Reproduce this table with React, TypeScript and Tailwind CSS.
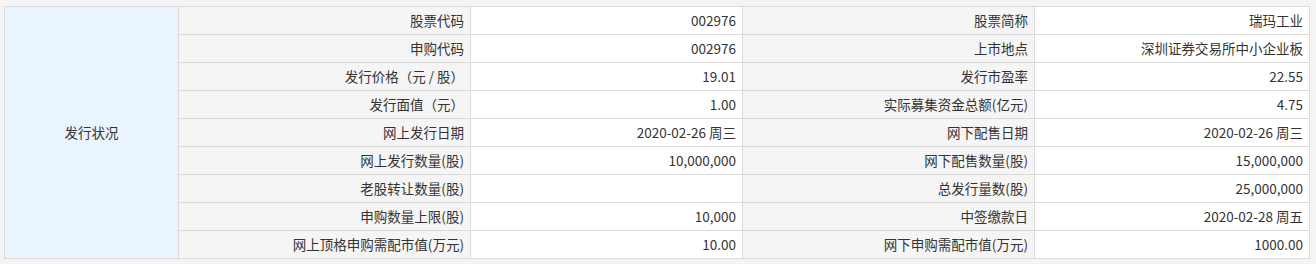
import React from 'react'

const rows: [string, string, string, string][] = [
  ['股票代码', '002976', '股票简称', '瑞玛工业'],
  ['申购代码', '002976', '上市地点', '深圳证券交易所中小企业板'],
  ['发行价格（元 / 股）', '19.01', '发行市盈率', '22.55'],
  ['发行面值（元）', '1.00', '实际募集资金总额(亿元)', '4.75'],
  ['网上发行日期', '2020-02-26 周三', '网下配售日期', '2020-02-26 周三'],
  ['网上发行数量(股)', '10,000,000', '网下配售数量(股)', '15,000,000'],
  ['老股转让数量(股)', '', '总发行量数(股)', '25,000,000'],
  ['申购数量上限(股)', '10,000', '中签缴款日', '2020-02-28 周五'],
  ['网上顶格申购需配市值(万元)', '10.00', '网下申购需配市值(万元)', '1000.00'],
]

const label = 'h-[28px] border border-[#dadada] bg-[#f5f5f5] px-[6px] text-right'
const value = 'h-[28px] border border-[#dadada] bg-white px-[6px] text-right'

export default function App() {
  return (
    <div
      className="h-[264px] w-[1316px] bg-[#f4f4f4] pl-[4px] pt-[6px] text-[13.5px] text-[#333] leading-none"
      style={{ fontFamily: '"Microsoft YaHei", "Noto Sans CJK SC", "Noto Sans", sans-serif' }}
    >
      <table className="w-[1305px] table-fixed border-collapse">
        <colgroup>
          <col className="w-[174px]" />
          <col className="w-[292px]" />
          <col className="w-[272px]" />
          <col className="w-[292px]" />
          <col className="w-[275px]" />
        </colgroup>
        <tbody>
          {rows.map((r, i) => (
            <tr key={i}>
              {i === 0 && (
                <td rowSpan={rows.length} className="border border-[#dadada] bg-[#eaf4fe] text-center">
                  发行状况
                </td>
              )}
              <td className={label}>{r[0]}</td>
              <td className={value}>{r[1]}</td>
              <td className={label}>{r[2]}</td>
              <td className={value}>{r[3]}</td>
            </tr>
          ))}
        </tbody>
      </table>
    </div>
  )
}
